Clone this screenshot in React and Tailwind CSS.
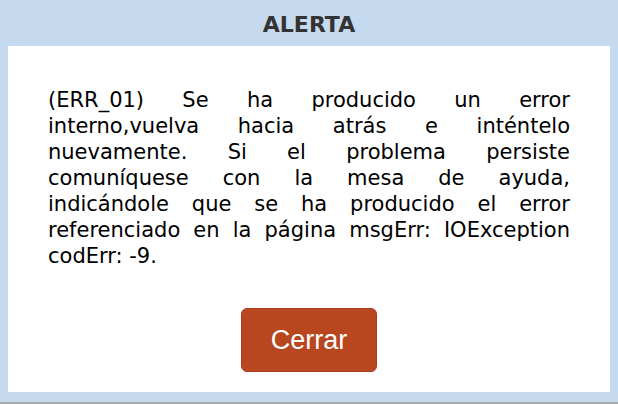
import React from 'react';

const lines = [
  '(ERR_01) Se ha producido un error',
  'interno,vuelva hacia atrás e inténtelo',
  'nuevamente. Si el problema persiste',
  'comuníquese con la mesa de ayuda,',
  'indicándole que se ha producido el error',
  'referenciado en la página msgErr: IOException',
];

export default function App() {
  return (
    <div className="flex h-[404px] w-[618px] flex-col bg-[#c6daef]">
      <div className="flex h-[46px] items-center justify-center pt-[2px] font-['DejaVu_Sans',Verdana,sans-serif] text-[22px] font-bold text-[#333333]">
        ALERTA
      </div>

      <div className="mx-[8px] flex h-[346px] flex-col bg-white px-10 pt-[41px] pb-[20px]">
        <p className="font-['DejaVu_Sans',Verdana,sans-serif] text-[21px] leading-[26px] text-black">
          {lines.map((line) => (
            <span key={line} className="block whitespace-nowrap text-justify [text-align-last:justify]">
              {line}
            </span>
          ))}
          <span className="block">codErr: -9.</span>
        </p>

        <div className="mt-[39px] flex justify-center">
          <button
            type="button"
            className="h-[64px] w-[136px] rounded-[6px] border border-[#a9401b] bg-[#b8461e] font-['Liberation_Sans',Arial,sans-serif] text-[27px] text-white"
          >
            Cerrar
          </button>
        </div>
      </div>

      <div className="flex-1" />
      <div className="h-[2px] bg-[#a9a9a9]" />
    </div>
  );
}
